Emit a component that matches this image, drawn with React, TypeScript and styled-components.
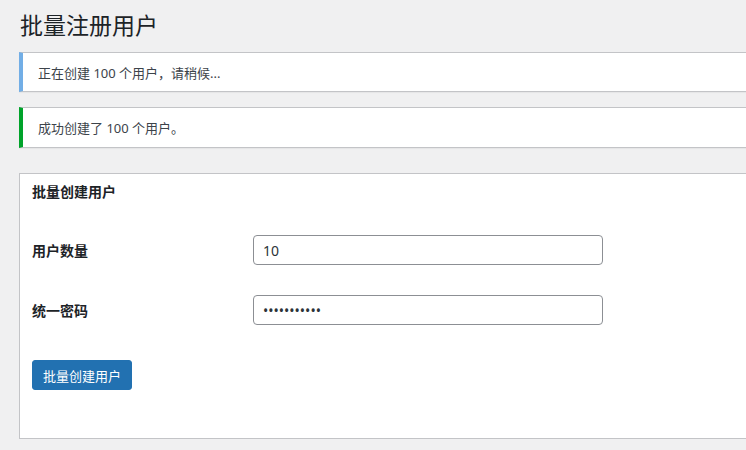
import styled, { createGlobalStyle } from "styled-components";

const GlobalStyle = createGlobalStyle`
  html, body {
    margin: 0;
    padding: 0;
    background: #f0f0f1;
  }
  body {
    font-family: "Segoe UI", "Noto Sans", "Noto Sans CJK SC", sans-serif;
    color: #1d2327;
    font-size: 13px;
  }
`;

// the panels run past the right edge in the screenshot, so clip them here
const Wrap = styled.div`
  overflow: hidden;
  padding: 9px 0 12px 19px;
`;

const PageTitle = styled.h1`
  margin: 0 0 11px 1px;
  font-size: 23px;
  font-weight: 400;
  line-height: 32px;
  color: #1d2327;
`;

const Notice = styled.div<{ tone: "info" | "success" }>`
  display: flex;
  align-items: center;
  height: 38px;
  margin-right: -20px;
  padding: 0 15px;
  background: #fff;
  border: 1px solid #c3c4c7;
  border-left: 4px solid ${(p) => (p.tone === "info" ? "#72aee6" : "#00a32a")};
  box-shadow: 0 1px 1px rgba(0, 0, 0, 0.04);
  margin-bottom: 15px;
  font-size: 13px;
  color: #3c434a;

  & + & {
    height: 39px;
  }
`;

const Card = styled.div`
  margin: 25px -20px 0 0;
  background: #fff;
  border: 1px solid #c3c4c7;
  padding: 8px 12px 48px;
`;

const CardTitle = styled.h2`
  margin: 0;
  font-size: 14px;
  line-height: 20px;
  font-weight: 600;
  color: #1d2327;
`;

const FormGrid = styled.div`
  display: grid;
  grid-template-columns: 221px 350px;
  row-gap: 30px;
  align-items: center;
  margin-top: 33px;
`;

const Label = styled.label`
  font-size: 14px;
  font-weight: 600;
  color: #1d2327;
`;

const Input = styled.input`
  box-sizing: border-box;
  width: 350px;
  height: 30px;
  padding: 0 9px;
  border: 1px solid #8c8f94;
  border-radius: 4px;
  font-family: "Segoe UI", "Noto Sans", sans-serif;
  font-size: 14px;
  color: #2c3338;
  background: #fff;
  outline: none;
`;

const Button = styled.button`
  margin-top: 35px;
  width: 100px;
  height: 30px;
  border: 1px solid #2271b1;
  border-radius: 3px;
  background: #2271b1;
  color: #fff;
  font-family: inherit;
  font-size: 13px;
  cursor: pointer;
`;

export default function App() {
  return (
    <>
      <GlobalStyle />
      <Wrap>
        <PageTitle>批量注册用户</PageTitle>
        <Notice tone="info">正在创建 100 个用户，请稍候...</Notice>
        <Notice tone="success">成功创建了 100 个用户。</Notice>
        <Card>
          <CardTitle>批量创建用户</CardTitle>
          <FormGrid>
            <Label htmlFor="count">用户数量</Label>
            <Input id="count" type="number" defaultValue="10" />
            <Label htmlFor="pwd">统一密码</Label>
            <Input id="pwd" type="password" defaultValue="12345678901" />
          </FormGrid>
          <Button type="button">批量创建用户</Button>
        </Card>
      </Wrap>
    </>
  );
}
